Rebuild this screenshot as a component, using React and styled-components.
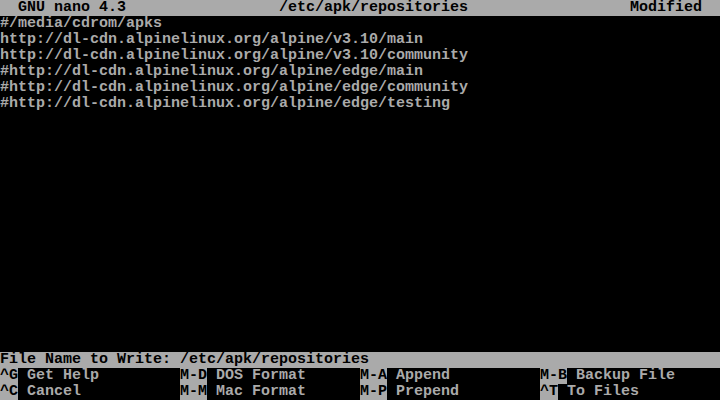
import React from 'react'
import styled, { createGlobalStyle } from 'styled-components'

const GlobalStyle = createGlobalStyle`
  html, body {
    margin: 0;
    padding: 0;
    background: #000;
  }
`

const Screen = styled.div`
  width: 720px;
  height: 400px;
  background: #000;
  color: #aaaaaa;
  font-family: "Liberation Mono", "DejaVu Sans Mono", monospace;
  font-size: 15px;
  font-weight: bold;
  line-height: 16px;
  display: flex;
  flex-direction: column;
  overflow: hidden;
  white-space: pre;
`

const TitleBar = styled.div`
  display: grid;
  grid-template-columns: 279px 1fr auto;
  height: 16px;
  background: #aaaaaa;
  color: #000;
  padding-right: 18px;
`

const Version = styled.span`
  padding-left: 18px;
`

const Editor = styled.div`
  flex: 1;
  display: flex;
  flex-direction: column;
`

const Line = styled.div`
  height: 16px;
`

const Prompt = styled.div`
  height: 16px;
  background: #aaaaaa;
  color: #000;
`

const Shortcuts = styled.div`
  display: grid;
  grid-template-columns: repeat(4, 180px);
  grid-auto-rows: 16px;
`

const Shortcut = styled.div`
  display: flex;
`

const Key = styled.span`
  background: #aaaaaa;
  color: #000;
`

const Label = styled.span`
  color: #aaaaaa;
`

const lines = [
  '#/media/cdrom/apks',
  'http://dl-cdn.alpinelinux.org/alpine/v3.10/main',
  'http://dl-cdn.alpinelinux.org/alpine/v3.10/community',
  '#http://dl-cdn.alpinelinux.org/alpine/edge/main',
  '#http://dl-cdn.alpinelinux.org/alpine/edge/community',
  '#http://dl-cdn.alpinelinux.org/alpine/edge/testing',
]

const shortcuts = [
  ['^G', 'Get Help'],
  ['M-D', 'DOS Format'],
  ['M-A', 'Append'],
  ['M-B', 'Backup File'],
  ['^C', 'Cancel'],
  ['M-M', 'Mac Format'],
  ['M-P', 'Prepend'],
  ['^T', 'To Files'],
]

export default function App() {
  return (
    <>
      <GlobalStyle />
      <Screen>
        <TitleBar>
          <Version>GNU nano 4.3</Version>
          <span>/etc/apk/repositories</span>
          <span>Modified</span>
        </TitleBar>
        <Editor>
          {lines.map((l, i) => <Line key={i}>{l}</Line>)}
        </Editor>
        <Prompt>File Name to Write: /etc/apk/repositories</Prompt>
        <Shortcuts>
          {shortcuts.map(([k, label]) => (
            <Shortcut key={k}>
              <Key>{k}</Key>
              <Label> {label}</Label>
            </Shortcut>
          ))}
        </Shortcuts>
      </Screen>
    </>
  )
}
